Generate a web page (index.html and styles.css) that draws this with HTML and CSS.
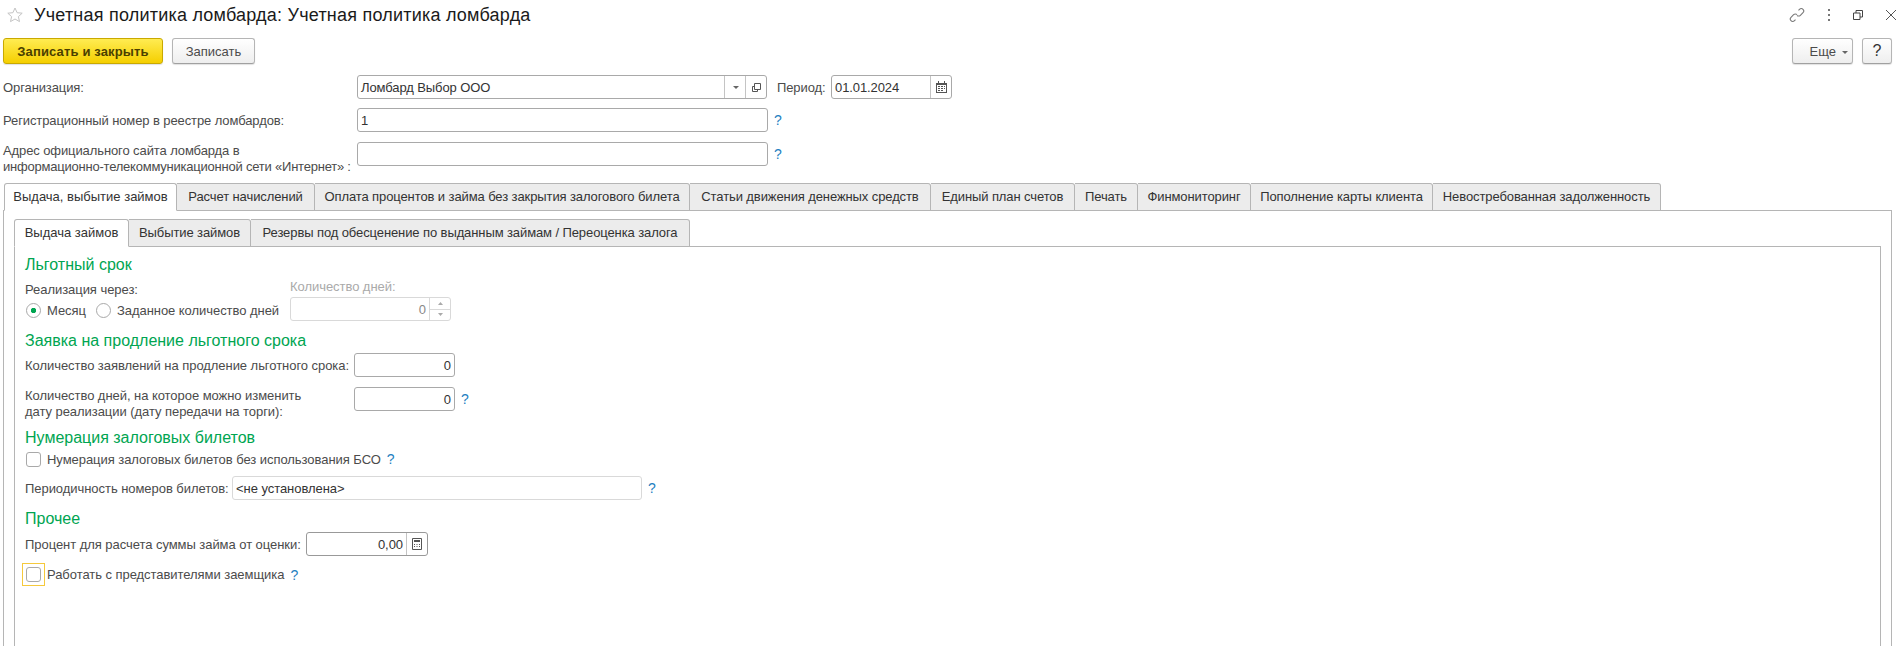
FILE: index.html
```html
<!DOCTYPE html>
<html>
<head>
    <title>Учетная политика ломбарда</title>
    <link rel="stylesheet" href="styles.css">
</head>
<body>
    <div class="titlebar">
        <svg class="star" width="16" height="16" viewBox="0 0 16 16"><path d="M8 1l2.1 4.7 5.1.5-3.8 3.4 1.1 5L8 12l-4.5 2.6 1.1-5L.8 6.2l5.1-.5z" fill="none" stroke="#c4c4c4"/></svg>
        <div class="title">Учетная политика ломбарда: Учетная политика ломбарда</div>
        <div class="window-icons">
            <svg width="16" height="16" viewBox="0 0 16 16"><g fill="none" stroke="#7a7a7a" stroke-width="1.1"><path d="M9.5 3.3l1-1c1-1 2.6-1 3.5 0s1 2.4 0 3.400l-2.600 2.600c-1 1-2.500 1-3.400 0"/><path d="M6.500 12.700l-1 1c-1 1-2.600 1-3.500 0s-1-2.400 0-3.400l2.600-2.600c1-1 2.500-1 3.400 0"/></g></svg>
            <svg width="4" height="14" viewBox="0 0 4 14"><g fill="#777"><rect x="1" y="1" width="2" height="2"/><rect x="1" y="6" width="2" height="2"/><rect x="1" y="11" width="2" height="2"/></g></svg>
            <svg width="10" height="10" viewBox="0 0 10 10"><g fill="none" stroke="#444"><path d="M.5 3h6.500v6.500H.5z"/><path d="M3 3V.5h6.500V7H7"/></g></svg>
            <svg width="12" height="12" viewBox="0 0 12 12"><path d="M1 1l10 10M11 1L1 11" stroke="#555" fill="none"/></svg>
        </div>
    </div>

    <div class="commandbar">
        <button class="btn btn-primary">Записать и закрыть</button>
        <button class="btn btn-save">Записать</button>
        <div class="spacer"></div>
        <button class="btn btn-more">Еще <span class="caret"></span></button>
        <button class="btn btn-help">?</button>
    </div>

    <div class="row row-org">
        <div class="label head-label">Организация:</div>
        <div class="field field-org">
            <span class="value">Ломбард Выбор ООО</span>
            <span class="field-btn"><span class="caret"></span></span>
            <span class="field-btn">
                <svg width="11" height="11" viewBox="0 0 11 11"><g fill="none" stroke="#555"><path d="M3.500 1.500h6v6h-6z"/><path d="M3.500 4.500h-2v5h5v-2"/></g></svg>
            </span>
        </div>
        <div class="label period-label">Период:</div>
        <div class="field field-date">
            <span class="value">01.01.2024</span>
            <span class="field-btn btn-cal">
                <svg width="11" height="12" viewBox="0 0 11 12"><path d="M2 0h1v2h5V0h1v2h2v10H0V2h2z" fill="#555"/><path d="M1 4h9v7H1z" fill="#fff"/><g fill="#555"><rect x="2" y="5" width="2" height="1"/><rect x="5" y="5" width="2" height="1"/><rect x="8" y="5" width="1" height="1"/><rect x="2" y="7" width="2" height="1"/><rect x="5" y="7" width="2" height="1"/><rect x="8" y="7" width="1" height="1"/><rect x="2" y="9" width="2" height="1"/><rect x="5" y="9" width="2" height="1"/></g></svg>
            </span>
        </div>
    </div>
    <div class="row row-reg">
        <div class="label head-label">Регистрационный номер в реестре ломбардов:</div>
        <div class="field field-wide"><span class="value">1</span></div>
        <span class="hint">?</span>
    </div>
    <div class="row row-site">
        <div class="label head-label two-lines">Адрес официального сайта ломбарда в<br><span class="tight">информационно-телекоммуникационной сети «Интернет» :</span></div>
        <div class="field field-wide"></div>
        <span class="hint">?</span>
    </div>

    <div class="tabs outer-tabs">
        <div class="tab active tab-w1">Выдача, выбытие займов</div>
        <div class="tab tab-w2">Расчет начислений</div>
        <div class="tab tab-w3">Оплата процентов и займа без закрытия залогового билета</div>
        <div class="tab tab-w4">Статьи движения денежных средств</div>
        <div class="tab tab-w5">Единый план счетов</div>
        <div class="tab tab-w6">Печать</div>
        <div class="tab tab-w7">Финмониторинг</div>
        <div class="tab tab-w8">Пополнение карты клиента</div>
        <div class="tab tab-w9">Невостребованная задолженность</div>
    </div>
    <div class="panel outer-panel">
        <div class="tabs inner-tabs">
            <div class="tab active tab-s1">Выдача займов</div>
            <div class="tab tab-s2">Выбытие займов</div>
            <div class="tab tab-s3">Резервы под обесценение по выданным займам / Переоценка залога</div>
        </div>
        <div class="panel inner-panel">
            <h2 class="group-title first">Льготный срок</h2>
            <div class="grace">
                <div class="grace-left">
                    <div class="label">Реализация через:</div>
                    <div class="radios">
                        <span class="radio checked"></span><span class="label">Месяц</span>
                        <span class="radio"></span><span class="label">Заданное количество дней</span>
                    </div>
                </div>
                <div class="grace-right">
                    <div class="label disabled">Количество дней:</div>
                    <div class="field field-days disabled-field">
                        <span class="value number">0</span>
                        <span class="spin">
                            <span class="spin-up"><svg width="5" height="3" viewBox="0 0 5 3"><path d="M2.500 0L5 3H0z" fill="#aaa"/></svg></span>
                            <span class="spin-down"><svg width="5" height="3" viewBox="0 0 5 3"><path d="M0 0h5L2.500 3z" fill="#aaa"/></svg></span>
                        </span>
                    </div>
                </div>
            </div>

            <h2 class="group-title second">Заявка на продление льготного срока</h2>
            <div class="form-line line-count">
                <div class="label w-count">Количество заявлений на продление льготного срока:</div>
                <div class="field field-num"><span class="value number">0</span></div>
            </div>
            <div class="form-line line-days">
                <div class="label w-count two-lines">Количество дней, на которое можно изменить<br>дату реализации (дату передачи на торги):</div>
                <div class="field field-num"><span class="value number">0</span></div>
                <span class="hint">?</span>
            </div>

            <h2 class="group-title third">Нумерация залоговых билетов</h2>
            <div class="check-line line-bso">
                <span class="checkbox"></span>
                <span class="label">Нумерация залоговых билетов без использования БСО</span>
                <span class="hint">?</span>
            </div>
            <div class="form-line line-period">
                <div class="label">Периодичность номеров билетов:</div>
                <div class="field field-period light-field"><span class="value">&lt;не установлена&gt;</span></div>
                <span class="hint">?</span>
            </div>

            <h2 class="group-title fourth">Прочее</h2>
            <div class="form-line line-percent">
                <div class="label">Процент для расчета суммы займа от оценки:</div>
                <div class="field field-percent">
                    <span class="value number">0,00</span>
                    <span class="field-btn btn-calc">
                        <svg width="10" height="12" viewBox="0 0 10 12"><path d="M.5.5h9v11h-9z" fill="#fff" stroke="#555"/><path d="M2 2h6v2H2z" fill="#555"/><g fill="#555"><rect x="2" y="6" width="1" height="1"/><rect x="4.500" y="6" width="1" height="1"/><rect x="7" y="6" width="1" height="1"/><rect x="2" y="8" width="1" height="1"/><rect x="4.500" y="8" width="1" height="1"/><rect x="7" y="8" width="1" height="1"/></g></svg>
                    </span>
                </div>
            </div>
            <div class="check-line line-agent">
                <span class="focus-box"><span class="checkbox"></span></span>
                <span class="label">Работать с представителями заемщика</span>
                <span class="hint">?</span>
            </div>
        </div>
    </div>
</body>
</html>
```

FILE: styles.css
```css
html, body {
    height: 100%;
}
body {
    margin: 0;
    background: #fff;
    font-family: "Liberation Sans", Arial, sans-serif;
    font-size: 13px;
    letter-spacing: -0.1px;
    color: #4b4b4b;
    overflow: hidden;
}

/* title */
.titlebar {
    display: flex;
    align-items: center;
    height: 30px;
    padding-left: 7px;
}
.star {
    flex: none;
}
.title {
    margin-left: 11px;
    font-size: 18px;
    letter-spacing: 0.22px;
    color: #1a1a1a;
}
.window-icons {
    display: flex;
    align-items: center;
    margin-left: auto;
    padding-right: 2px;
    gap: 22px;
}

/* command bar */
.commandbar {
    display: flex;
    margin-top: 8px;
    padding: 0 7px 0 3px;
}
.spacer {
    flex: 1;
}
.btn {
    height: 26px;
    margin-right: 9px;
    padding: 0 14px;
    border: 1px solid #b5b5b5;
    border-bottom-color: #a0a0a0;
    border-radius: 3px;
    background: linear-gradient(#ffffff, #eeeeee);
    box-shadow: 0 1px 1px rgba(0, 0, 0, 0.12);
    font: 13px "Liberation Sans", Arial, sans-serif;
    color: #4b4b4b;
}
.btn-primary {
    width: 160px;
    padding: 0;
    border-color: #c9a900;
    background: linear-gradient(#ffec52, #f5cf00);
    font-weight: bold;
    color: #4a4000;
    letter-spacing: 0.15px;
}
.btn-save {
    width: 83px;
    padding: 0;
}
.btn-more {
    width: 61px;
    padding: 0 0 0 12px;
}
.btn-help {
    width: 30px;
    margin-right: 0;
    padding: 0;
    font-size: 16px;
    color: #333;
}
.caret {
    display: inline-block;
    width: 0;
    height: 0;
    margin-left: 2px;
    vertical-align: 2px;
    border-left: 3px solid transparent;
    border-right: 3px solid transparent;
    border-top: 3px solid #666;
}

/* head form */
.row {
    display: flex;
    align-items: center;
    height: 24px;
    padding-left: 3px;
}
.row-org {
    margin-top: 11px;
}
.row-reg {
    margin-top: 9px;
}
.row-site {
    margin-top: 10px;
}
.head-label {
    flex: none;
    width: 354px;
}
.two-lines {
    line-height: 16px;
}
.row-site .two-lines {
    margin-top: 9px;
}
.tight {
    letter-spacing: -0.22px;
}
.label {
    white-space: nowrap;
}
.period-label {
    flex: none;
    margin-left: 10px;
    width: 54px;
}
.field {
    display: flex;
    align-items: center;
    flex: none;
    box-sizing: border-box;
    height: 24px;
    border: 1px solid #a9a9a9;
    border-radius: 3px;
    background: #fff;
    color: #333;
}
.value {
    flex: 1;
    padding: 0 3px;
    white-space: nowrap;
    overflow: hidden;
}
.number {
    text-align: right;
}
.field-org {
    width: 410px;
}
.field-wide {
    width: 411px;
}
.field-date {
    width: 121px;
}
.field-btn {
    display: flex;
    align-items: center;
    justify-content: center;
    flex: none;
    width: 20px;
    height: 100%;
    border-left: 1px solid #c4c4c4;
}
.hint {
    margin-left: 6px;
    font-size: 14px;
    color: #1f7fc1;
}

/* tabs */
.tabs {
    display: flex;
    position: relative;
    z-index: 1;
}
.outer-tabs {
    margin-top: 17px;
    padding-left: 4px;
}
.tab {
    box-sizing: border-box;
    flex: none;
    height: 28px;
    margin-bottom: -1px;
    border: 1px solid #b5b5b5;
    border-left: none;
    border-radius: 0 3px 0 0;
    background: #ececec;
    color: #333;
    line-height: 25px;
    text-align: center;
    white-space: nowrap;
}
.tab.active {
    border-left: 1px solid #b5b5b5;
    border-bottom-color: #fff;
    border-radius: 3px 3px 0 0;
    background: #fff;
    letter-spacing: 0;
}
.tab-w1 { width: 173px; }
.tab-w2 { width: 138px; }
.tab-w3 { width: 375px; }
.tab-w4 { width: 241px; }
.tab-w5 { width: 144px; }
.tab-w6 { width: 63px; }
.tab-w7 { width: 113px; }
.tab-w8 { width: 182px; }
.tab-w9 { width: 228px; }
.tab-s1 { width: 115px; }
.tab-s2 { width: 122px; }
.tab-s3 { width: 439px; }
.panel {
    box-sizing: border-box;
    border: 1px solid #b5b5b5;
}
.outer-panel {
    height: 700px;
    margin: 0 7px 0 3px;
    padding: 8px 10px 0 10px;
}
.inner-panel {
    height: 600px;
    padding-left: 10px;
    letter-spacing: -0.05px;
}

/* groups */
.group-title {
    margin: 0;
    height: 20px;
    font-size: 16px;
    font-weight: normal;
    line-height: 20px;
    letter-spacing: 0;
    color: #00a551;
    white-space: nowrap;
}
.group-title.first {
    margin-top: 8px;
}
.group-title.second {
    margin-top: 10px;
}
.group-title.third {
    margin-top: 17px;
}
.group-title.fourth {
    margin-top: 9px;
}
.grace {
    display: flex;
}
.grace-left {
    margin-top: 7px;
    width: 265px;
}
.grace-right {
    margin-top: 4px;
}
.grace-right .label,
.grace-left > .label {
    height: 16px;
    line-height: 16px;
}
.radios {
    display: flex;
    align-items: center;
    margin-top: 4px;
    height: 16px;
    padding-left: 1px;
}
.radio {
    flex: none;
    box-sizing: border-box;
    width: 15px;
    height: 15px;
    margin-right: 6px;
    border: 1px solid #a9a9a9;
    border-radius: 50%;
    background: #fff;
}
.radio.checked {
    background: radial-gradient(circle, #00a551 0, #00a551 2.4px, #fff 3px);
}
.radios .label {
    margin-right: 10px;
}
.disabled {
    color: #aaa;
}
.field-days {
    width: 161px;
    margin-top: 2px;
}
.disabled-field {
    border-color: #d9d9d9;
    color: #888;
}
.spin {
    display: flex;
    flex-direction: column;
    flex: none;
    width: 20px;
    height: 100%;
    border-left: 1px solid #d9d9d9;
}
.spin-up,
.spin-down {
    display: flex;
    align-items: center;
    justify-content: center;
    flex: 1;
}
.spin-up {
    border-bottom: 1px solid #d9d9d9;
}

.form-line {
    display: flex;
    align-items: center;
    height: 24px;
}
.line-count {
    margin-top: 2px;
}
.line-days {
    margin-top: 10px;
}
.line-days .two-lines {
    margin-top: 10px;
}
.w-count {
    flex: none;
    width: 329px;
}
.field-num {
    width: 101px;
}
.check-line {
    display: flex;
    align-items: center;
}
.checkbox {
    flex: none;
    box-sizing: border-box;
    width: 15px;
    height: 15px;
    border: 1px solid #a9a9a9;
    border-radius: 3px;
    background: #fff;
}
.line-bso {
    height: 16px;
    margin-top: 3px;
    padding-left: 1px;
}
.line-bso .checkbox {
    margin-right: 6px;
}
.line-period {
    margin-top: 9px;
}
.line-period .label {
    flex: none;
    width: 207px;
}
.field-period {
    width: 410px;
}
.light-field {
    border-color: #d9d9d9;
}
.line-percent {
    margin-top: 3px;
}
.line-percent .label {
    flex: none;
    width: 281px;
}
.field-percent {
    width: 122px;
    border-color: #999;
}
.line-agent {
    margin-top: 7px;
    margin-left: -3px;
}
.focus-box {
    display: flex;
    align-items: center;
    justify-content: center;
    box-sizing: border-box;
    width: 23px;
    height: 23px;
    margin-right: 2px;
    border: 1px solid #f5c93c;
}
```
